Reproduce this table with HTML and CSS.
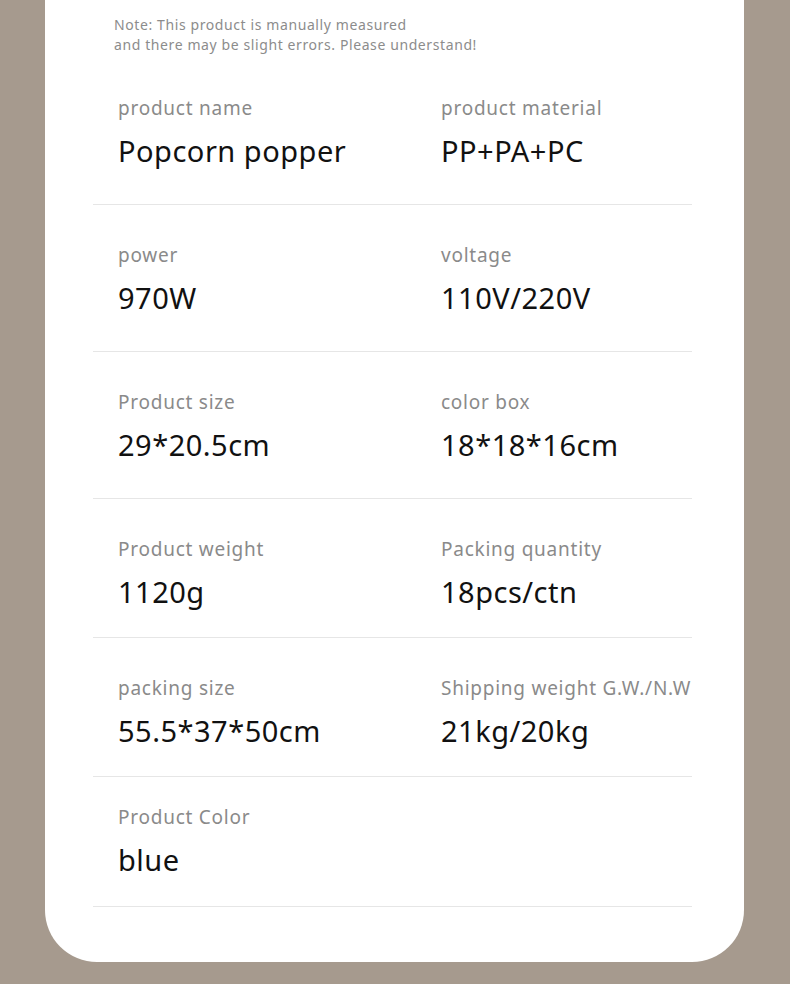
FILE: index.html
```html
<!DOCTYPE html>
<html>
<head>
<meta charset="utf-8">
<link rel="stylesheet" href="styles.css">
</head>
<body>
<div class="card">
  <p class="note">Note: This product is manually measured<br>and there may be slight errors. Please understand!</p>
  <div class="table">
    <div class="row">
      <div class="cell"><div class="label">product name</div><div class="value">Popcorn popper</div></div>
      <div class="cell"><div class="label">product material</div><div class="value">PP+PA+PC</div></div>
    </div>
    <div class="row">
      <div class="cell"><div class="label">power</div><div class="value">970W</div></div>
      <div class="cell"><div class="label">voltage</div><div class="value">110V/220V</div></div>
    </div>
    <div class="row">
      <div class="cell"><div class="label">Product size</div><div class="value">29*20.5cm</div></div>
      <div class="cell"><div class="label">color box</div><div class="value">18*18*16cm</div></div>
    </div>
    <div class="row row-mid">
      <div class="cell"><div class="label">Product weight</div><div class="value">1120g</div></div>
      <div class="cell"><div class="label">Packing quantity</div><div class="value">18pcs/ctn</div></div>
    </div>
    <div class="row row-mid">
      <div class="cell"><div class="label">packing size</div><div class="value">55.5*37*50cm</div></div>
      <div class="cell"><div class="label">Shipping weight G.W./N.W</div><div class="value">21kg/20kg</div></div>
    </div>
    <div class="row row-last">
      <div class="cell"><div class="label">Product Color</div><div class="value">blue</div></div>
      <div class="cell"></div>
    </div>
  </div>
</div>
</body>
</html>
```
FILE: styles.css
```css
html, body {
  margin: 0;
  padding: 0;
  background: #a69a8e;
}
body {
  width: 790px;
  height: 984px;
  overflow: hidden;
  font-family: "Noto Sans", "Open Sans", sans-serif;
}
.card {
  margin-left: 45px;
  width: 699px;
  height: 962px;
  background: #ffffff;
  border-radius: 0 0 52px 52px;
  box-sizing: border-box;
  padding-top: 15px;
}
.note {
  margin: 0 0 3px 69px;
  font-size: 14px;
  line-height: 20px;
  letter-spacing: 0.6px;
  color: #8c8c8c;
}
.table {
  margin-left: 48px;
  width: 599px;
}
.row {
  display: grid;
  grid-template-columns: 323px 1fr;
  padding-left: 25px;
  height: 147px;
  box-sizing: border-box;
  border-bottom: 1px solid #e6e6e6;
  padding-top: 38px;
}
.row-mid { height: 139px; }
.row-last { height: 130px; padding-top: 28px; }
.label {
  font-size: 19px;
  line-height: 24px;
  letter-spacing: 0.75px;
  color: #8a8a8a;
  white-space: nowrap;
}
.value {
  margin-top: 13px;
  font-size: 29px;
  line-height: 36px;
  letter-spacing: 0.5px;
  color: #111111;
  white-space: nowrap;
}
```
